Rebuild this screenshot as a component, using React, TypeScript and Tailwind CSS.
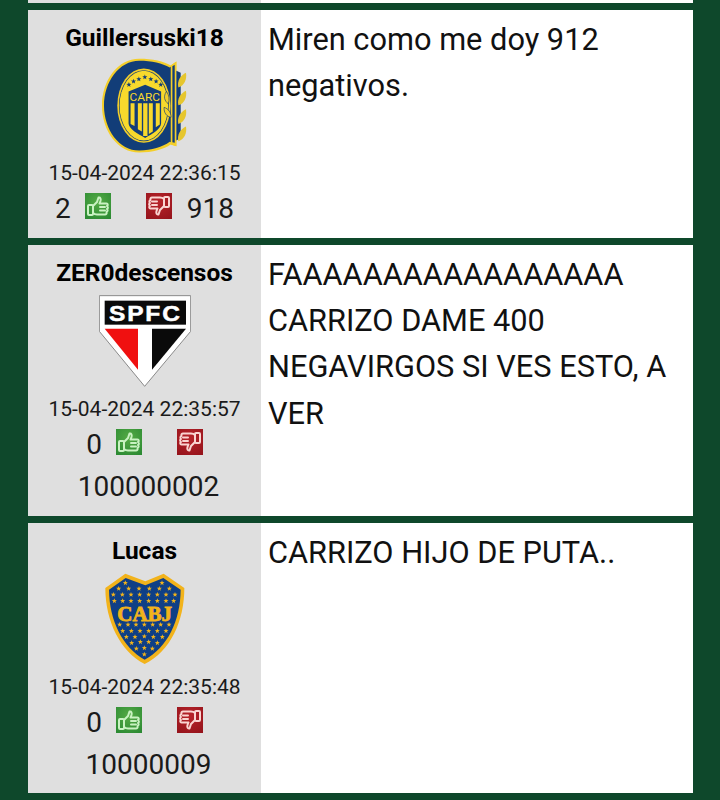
const starPoints = (cx: number, cy: number, r: number) => {
  const pts: string[] = [];
  for (let i = 0; i < 10; i++) {
    const radius = i % 2 === 0 ? r : r * 0.42;
    const angle = -Math.PI / 2 + (i * Math.PI) / 5;
    pts.push(`${cx + radius * Math.cos(angle)},${cy + radius * Math.sin(angle)}`);
  }
  return pts.join(" ");
};

const CentralLogo = () => (
  <svg viewBox="38 22 256 288" className="h-[96px] w-[85px]">
    <path d="M150 24C85 24 38 90 38 165C38 240 85 306 150 306C190 306 225 296 245 282L262 287V32L245 44C225 32 190 24 150 24Z" fill="#f4cf2a" />
    <path d="M150 30C90 30 44 93 44 165C44 237 90 300 150 300C188 300 220 290 242 274L255 278V42L242 50C220 38 188 30 150 30Z" fill="#123d78" />
    <path d="M245 44L262 32V287L245 282Z" fill="#f4cf2a" />
    <path d="M250 46L257 42V277L250 275Z" fill="#123d78" />
    <path d="M262 60L275 66V262L262 270Z" fill="#123d78" />
    <ellipse cx="164" cy="165" rx="80" ry="112" fill="#f4cf2a" />
    <ellipse cx="164" cy="165" rx="75" ry="107" fill="#123d78" />
    <ellipse cx="164" cy="165" rx="73" ry="105" fill="#f8d92c" />
    <path d="M168 102L216 122V218C216 235 190 250 168 262C146 250 118 235 118 218V122Z" fill="#123d78" />
    <path d="M124 158H136V226L124 220ZM146 158H158V243L146 236ZM179 158H191V243L179 250ZM200 158H212V222L200 230ZM162 158H175V256H162Z" fill="#f8d92c" />
    <text x="167" y="151" textAnchor="middle" fontFamily="Roboto, sans-serif" fontSize="34" fill="#f8d92c" textLength="92" lengthAdjust="spacingAndGlyphs">CARC</text>
    {[[119, 102], [133, 92], [149, 85], [167, 79], [185, 85], [201, 92], [215, 102]].map(([x, y]) => (
      <polygon key={x} points={starPoints(x, y, 8)} fill="#123d78" />
    ))}
    {[76, 130, 186, 238].map((y) => (
      <path key={y} d={`M268 ${y + 34}C263 ${y + 14} 275 ${y - 2} 291 ${y - 10}C294 ${y + 10} 287 ${y + 28} 268 ${y + 34}Z`} fill="#e6c62e" />
    ))}
    <path d="M232 122C222 138 226 150 238 160C242 146 240 132 232 122ZM225 170C224 186 232 198 246 200C246 186 238 174 225 170Z" fill="#f4cf2a" stroke="#123d78" strokeWidth="2" />
  </svg>
);

const SpfcLogo = () => (
  <svg viewBox="55 32 276 274" className="h-[92px] w-[92px]">
    <polygon points="56,33 330,33 330,140 192,305 56,140" fill="#fff" stroke="#8a8a8a" strokeWidth="3" />
    <rect x="72" y="48" width="244" height="72" fill="#0a0a0a" />
    <text x="194" y="108" textAnchor="middle" fontFamily="Liberation Sans, sans-serif" fontWeight="700" fontSize="68" letterSpacing="5" fill="#fff" stroke="#fff" strokeWidth="1.5" textLength="218" lengthAdjust="spacingAndGlyphs">SPFC</text>
    <polygon points="72,132 172,132 172,255" fill="#f01010" />
    <polygon points="214,132 316,132 214,255" fill="#0a0a0a" />
  </svg>
);

const bocaStars = [
  [105, 55], [215, 55],
  [85, 72], [115, 72], [146, 72], [177, 72], [207, 72], [237, 72],
  [69, 90], [96, 90], [122, 90], [148, 90], [175, 90], [201, 90], [227, 90], [254, 90],
  [72, 109], [97, 109], [122, 109], [148, 109], [175, 109], [201, 109], [227, 109], [250, 109],
  [88, 180], [113, 180], [137, 180], [162, 180], [187, 180], [211, 180], [236, 180],
  [97, 199], [123, 199], [149, 199], [175, 199], [201, 199], [227, 199],
  [108, 217], [134, 217], [162, 215], [189, 217], [216, 217],
  [124, 235], [150, 232], [175, 232], [201, 235],
  [138, 252], [162, 250], [186, 252],
  [162, 269],
];

const BocaLogo = () => (
  <svg viewBox="44 26 240 274" className="h-[92px] w-[80px]">
    <path d="M45 70L105 27L165 50L220 27L282 70C282 170 240 260 163 298C90 260 45 170 45 70Z" fill="#f2b31b" />
    <path d="M56 75L106 40L165 62L219 40L271 75C270 168 232 248 163 285C97 248 57 168 56 75Z" fill="#0f3f86" />
    {bocaStars.map(([x, y]) => (
      <polygon key={`${x}-${y}`} points={starPoints(x, y, 8)} fill="#f2b31b" />
    ))}
    <text x="163" y="168" textAnchor="middle" fontFamily="Liberation Serif, serif" fontWeight="700" fontSize="62" fill="#f2b31b" stroke="#f2b31b" strokeWidth="2.5" textLength="164" lengthAdjust="spacingAndGlyphs">CABJ</text>
  </svg>
);

const ThumbUp = () => (
  <svg viewBox="0 0 26 26" className="h-[26px] w-[26px] shrink-0">
    <defs>
      <radialGradient id="greenBox" cx="50%" cy="35%" r="75%">
        <stop offset="0%" stopColor="#55ab45" />
        <stop offset="100%" stopColor="#2c8a33" />
      </radialGradient>
    </defs>
    <rect width="26" height="26" fill="url(#greenBox)" />
    <g fill="none" stroke="#c9f2c2" strokeWidth="2" strokeLinejoin="round" strokeLinecap="round">
      <rect x="3" y="12" width="5" height="10" rx="1" />
      <path d="M8 13L12 9L13.5 4.5C15.5 4 16 6 15.5 8L14.5 10.5H21.5C23 10.5 23.2 12.5 22 13C23.2 14 23.2 15.5 22 16C23 17 22.8 18.5 21.5 19C22 20.5 21 21.5 20 21.5H12C10 21.5 9 21 8 20" />
      <path d="M15 14H20M15 17.5H20" />
    </g>
  </svg>
);

const ThumbDown = () => (
  <svg viewBox="0 0 26 26" className="h-[26px] w-[26px] shrink-0">
    <defs>
      <radialGradient id="redBox" cx="50%" cy="35%" r="75%">
        <stop offset="0%" stopColor="#b8242a" />
        <stop offset="100%" stopColor="#96141c" />
      </radialGradient>
    </defs>
    <rect width="26" height="26" fill="url(#redBox)" />
    <g fill="none" stroke="#fad4d1" strokeWidth="2" strokeLinejoin="round" strokeLinecap="round">
      <rect x="18" y="4" width="5" height="10" rx="1" />
      <path d="M18 13L14 17L12.5 21.5C10.5 22 10 20 10.5 18L11.5 15.5H4.5C3 15.5 2.8 13.5 4 13C2.8 12 2.8 10.5 4 10C3 9 3.2 7.5 4.5 7C4 5.5 5 4.5 6 4.5H14C16 4.5 17 5 18 6" />
      <path d="M6 8.5H11M6 12H11" />
    </g>
  </svg>
);

type Post = {
  user: string;
  date: string;
  up: string;
  down: string;
  text: string[];
  logo: React.ReactNode;
  logoBox: string;
  downGap: string;
  height: string;
};

const posts: Post[] = [
  { user: "Guillersuski18", date: "15-04-2024 22:36:15", up: "2", down: "918", text: ["Miren como me doy 912", "negativos."], logo: <CentralLogo />, logoBox: "mt-[3px] h-[97px]", downGap: "ml-[15px]", height: "h-[228px]" },
  { user: "ZER0descensos", date: "15-04-2024 22:35:57", up: "0", down: "100000002", text: ["FAAAAAAAAAAAAAAAAA", "CARRIZO DAME 400", "NEGAVIRGOS SI VES ESTO, A", "VER"], logo: <SpfcLogo />, logoBox: "mt-[5px] h-[96px]", downGap: "ml-[8px]", height: "h-[271px]" },
  { user: "Lucas", date: "15-04-2024 22:35:48", up: "0", down: "10000009", text: ["CARRIZO HIJO DE PUTA.."], logo: <BocaLogo />, logoBox: "mt-[5px] h-[96px]", downGap: "ml-[8px]", height: "h-[270px]" },
];

export default function App() {
  return (
    <div className="h-[800px] w-[720px] overflow-hidden bg-[#0e482b] px-[28px] font-['Roboto',sans-serif] text-black">
      <div className="flex w-[665px] flex-col gap-[7px]">
        <div className="flex h-[3px]">
          <div className="w-[233px] bg-[#dfdfdf]" />
          <div className="flex-1 bg-white" />
        </div>
        {posts.map((post) => (
          <div key={post.user} className={`flex ${post.height}`}>
            <div className="flex w-[233px] flex-col items-center bg-[#dfdfdf] pt-[11px]">
              <div className="h-[34px] text-[24.5px] leading-[34px] font-bold">{post.user}</div>
              <div className={`flex items-start justify-center ${post.logoBox}`}>{post.logo}</div>
              <div className="mt-[5px] h-[26px] text-[21px] leading-[26px] text-[#1a1a1a]">{post.date}</div>
              <div className="mt-[2px] flex flex-wrap items-center justify-center text-[28px] leading-[42px] text-[#1a1a1a]">
                <span>{post.up}</span>
                <span className="ml-[14px] -translate-y-[3px]"><ThumbUp /></span>
                <span className="ml-[35px] -translate-y-[3px]"><ThumbDown /></span>
                <span className={post.downGap}>{post.down}</span>
              </div>
            </div>
            <div className="flex-1 bg-white pt-[6.5px] pl-[7px] text-[30.75px] leading-[46.4px] text-[#111111]">
              {post.text.map((line) => (
                <div key={line} className="whitespace-nowrap">{line}</div>
              ))}
            </div>
          </div>
        ))}
      </div>
    </div>
  );
}
